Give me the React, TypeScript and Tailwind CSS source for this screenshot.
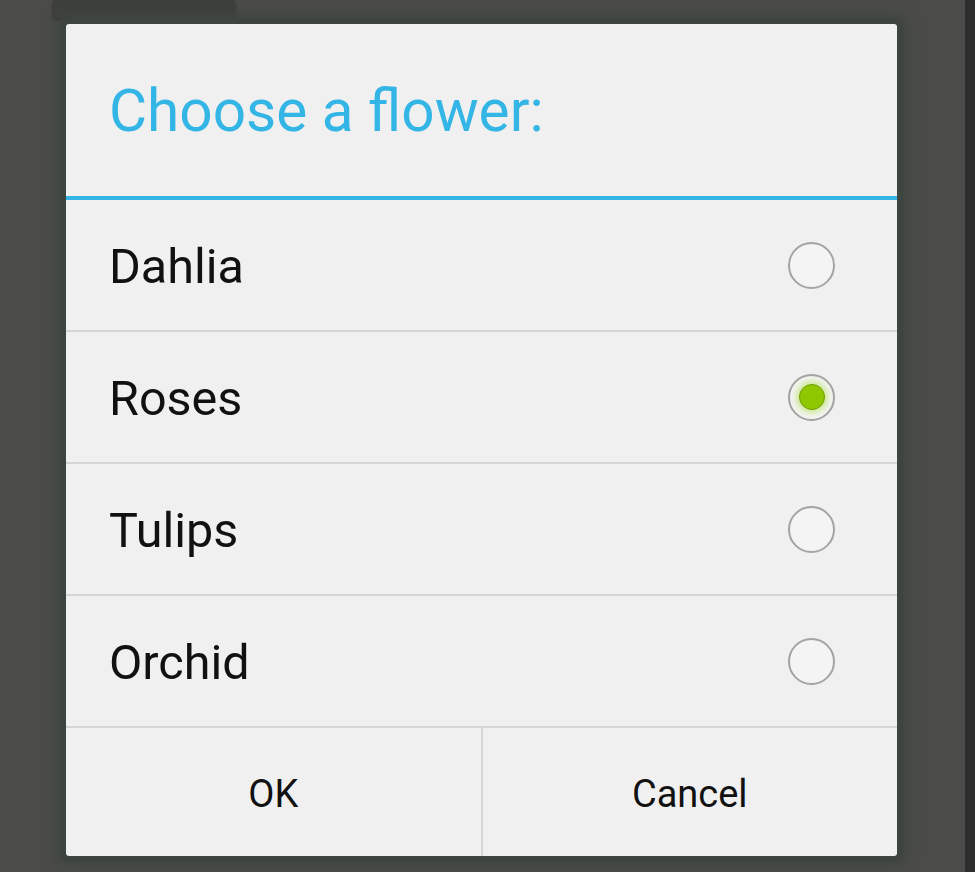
const FLOWERS = ['Dahlia', 'Roses', 'Tulips', 'Orchid']

function Radio({ checked }: { checked: boolean }) {
  return (
    <div className="flex h-[47px] w-[47px] items-center justify-center rounded-full border-2 border-[#a3a3a3] bg-[#f4f4f4]">
      {checked ? (
        <div className="h-[26px] w-[26px] rounded-full border border-[#6f9a00] bg-[#8fc800] shadow-[0_0_6px_3px_rgba(170,220,60,0.55)]" />
      ) : null}
    </div>
  )
}

export default function App() {
  return (
    <div
      className="flex h-[872px] w-[975px] overflow-hidden bg-[#4b4c49]"
      style={{ fontFamily: 'Roboto, "Noto Sans", sans-serif' }}
    >
      <div className="flex flex-1 flex-col">
        {/* stray action bar piece */}
        <div className="ml-[53px] h-[18px] w-[182px] bg-[#3d3f3c] shadow-[0_2px_3px_rgba(40,44,40,0.8)]" />

        {/* Dialog */}
        <div className="ml-[66px] mt-[6px] flex h-[832px] w-[831px] flex-col rounded-[3px] bg-[#f0f0f0] shadow-[0_0_0_6px_#3e443e,0_0_14px_10px_#40463f]">
          <div className="flex h-[172px] items-center px-[43px] pt-[4px] text-[58.5px] text-[#33b5e5]">
            Choose a flower:
          </div>
          <div className="h-[4px] bg-[#33b5e5]" />

          <div className="flex flex-col">
            {FLOWERS.map((f, i) => (
              <div
                key={f}
                className="flex h-[132px] items-center justify-between border-b-2 border-[#d6d6d6] pl-[43px] pr-[62px]"
              >
                <span className="pt-[5px] text-[48.5px] text-[#111111]">{f}</span>
                <Radio checked={i === 1} />
              </div>
            ))}
          </div>

          <div className="flex flex-1">
            <button className="flex flex-1 items-center justify-center border-r-2 border-[#d6d6d6] pt-[4px] text-[38px] text-[#111111]">
              OK
            </button>
            <button className="flex flex-1 items-center justify-center pt-[4px] text-[38px] text-[#111111]">
              Cancel
            </button>
          </div>
        </div>
      </div>
      <div className="w-[10px] bg-[#2d2d2d]" />
    </div>
  )
}
